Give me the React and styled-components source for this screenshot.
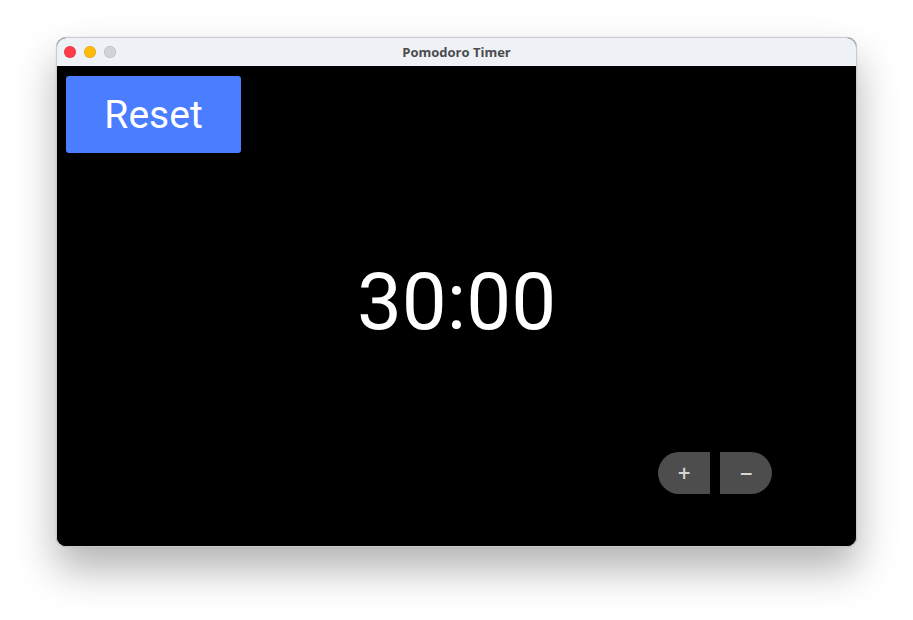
import React, { useState } from 'react';
import styled, { createGlobalStyle } from 'styled-components';

const GlobalStyle = createGlobalStyle`
  html, body {
    margin: 0;
    padding: 0;
    background: #ffffff;
  }

  body {
    font-family: Roboto, "Liberation Sans", sans-serif;
  }
`;

const Page = styled.div`
  width: 913px;
  height: 620px;
  padding: 37px 0 0 56px;
  box-sizing: border-box;
`;

const Window = styled.div`
  width: 801px;
  border-radius: 10px;
  overflow: hidden;
  border: 1px solid #c9cbcf;
  box-sizing: border-box;
  box-shadow: 0 22px 40px rgba(0, 0, 0, 0.3), 0 0 1px rgba(0, 0, 0, 0.25);
  background: #000;
`;

const TitleBar = styled.div`
  height: 28px;
  background: #eef1f6;
  display: flex;
  align-items: center;
  position: relative;
  padding-left: 7px;
  gap: 8px;
`;

const Light = styled.span`
  width: 12px;
  height: 12px;
  border-radius: 50%;
  background: ${p => p.color};
  box-shadow: inset 0 0 0 0.5px rgba(0, 0, 0, 0.15);
`;

const Title = styled.div`
  position: absolute;
  left: 0;
  right: 0;
  text-align: center;
  font-family: "Open Sans", "Liberation Sans", sans-serif;
  font-size: 13px;
  font-weight: 700;
  color: #4b4b4d;
  pointer-events: none;
`;

const Content = styled.main`
  height: 480px;
  display: grid;
  grid-template-rows: auto 1fr auto;
  background: #000;
  color: #fff;
`;

const ResetButton = styled.button`
  justify-self: start;
  margin: 10px 0 0 9px;
  width: 175px;
  height: 77px;
  border: none;
  border-radius: 3px;
  background: #4a7dff;
  color: #fff;
  font-family: Roboto, "Liberation Sans", sans-serif;
  font-size: 39px;
  cursor: pointer;
`;

const Clock = styled.div`
  display: flex;
  align-items: center;
  justify-content: center;
  font-size: 80px;
  font-weight: 400;
  padding-bottom: 2px;
`;

const Controls = styled.div`
  display: flex;
  justify-content: flex-end;
  gap: 10px;
  padding: 0 84px 52px 0;
`;

const StepButton = styled.button`
  width: 52px;
  height: 42px;
  border: none;
  background: #4d4d4d;
  color: #d4d4d4;
  font-family: "DejaVu Sans", sans-serif;
  font-size: 17px;
  font-weight: 700;
  cursor: pointer;
  border-radius: ${p => (p.side === 'left' ? '21px 0 0 21px' : '0 21px 21px 0')};
`;

const pad = n => String(n).padStart(2, '0');

export default function App() {
  const [minutes, setMinutes] = useState(30);

  return (
    <>
      <GlobalStyle />
      <Page>
        <Window>
          <TitleBar>
            <Light color="#fe3b4a" />
            <Light color="#fdbb0c" />
            <Light color="#cfd2d7" />
            <Title>Pomodoro Timer</Title>
          </TitleBar>
          <Content>
            <ResetButton onClick={() => setMinutes(30)}>Reset</ResetButton>
            <Clock>
              {pad(minutes)}:00
            </Clock>
            <Controls>
              <StepButton side="left" onClick={() => setMinutes(m => m + 1)}>+</StepButton>
              <StepButton side="right" onClick={() => setMinutes(m => Math.max(1, m - 1))}>−</StepButton>
            </Controls>
          </Content>
        </Window>
      </Page>
    </>
  );
}
